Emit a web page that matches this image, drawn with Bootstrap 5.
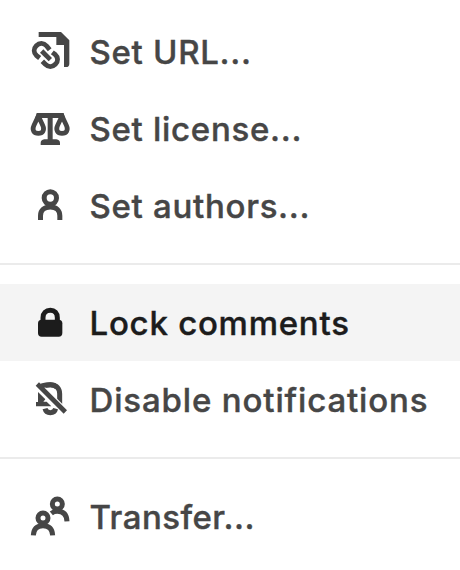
<!DOCTYPE html>
<html lang="en">
<head>
<meta charset="utf-8">
<meta name="viewport" content="width=device-width, initial-scale=1">
<title>Post menu</title>
<link rel="stylesheet" href="https://cdn.jsdelivr.net/npm/bootstrap@5.3.0/dist/css/bootstrap.min.css">
<style>
body { background: #fff; overflow: hidden; }
.post-menu { padding-top: 14px; font: 500 33px/40px Inter, "Liberation Sans", sans-serif; letter-spacing: .7px; }
.menu-entry { height: 77px; padding: 0 0 0 25px; color: #464646; background: transparent; white-space: nowrap; -webkit-text-stroke: .4px currentColor; }
.menu-entry.is-current { color: #1c1c1c; background: #f4f4f4; letter-spacing: .75px; }
.menu-entry svg { width: 52px; height: 52px; margin: -1px 12.5px 0 0; fill: none; stroke: currentColor; }
.menu-entry .solid { fill: currentColor; stroke: none; }
.raised { margin-top: -2px; }
.tracked { letter-spacing: .85px; }
.snug { letter-spacing: .45px; }
.menu-rule { height: 2px; margin: 18px 0 19px; background: #ebebeb; }
.menu-rule.second { margin-top: 19px; }
</style>
</head>
<body>
<nav class="post-menu d-flex flex-column" aria-label="Post settings">
  <a class="menu-entry d-flex align-items-center text-decoration-none" href="#">
    <svg class="flex-shrink-0" viewBox="0 3 156 156" aria-hidden="true">
      <path class="solid" d="M41 21H108L133 46V116Q133 126 123 126H117V60H94V36H41Z"/>
      <g stroke-width="14.500">
        <path d="M74 74L65 63C56 53 43 53 34 62C25 71 26 83 34 91L44 99"/>
        <path d="M82 82L90 88C100 97 100 109 91 118C82 127 70 127 61 118L52 109"/>
        <path stroke-width="14" d="M50 78L76 104"/>
      </g>
    </svg>
    <span class="raised">Set URL...</span>
  </a>
  <a class="menu-entry d-flex align-items-center text-decoration-none" href="#">
    <svg class="flex-shrink-0" viewBox="0 0 156 156" aria-hidden="true">
      <path class="solid" d="M37 30H113V45H83V109H94Q105 111 105 120V126H47V120Q47 111 58 109H68V45H37Z"/>
      <path stroke-width="14" stroke-linejoin="round" d="M40 39L27 67C20 82 27 91 40 91S60 82 53 67Z"/>
      <path stroke-width="14" stroke-linejoin="round" d="M111 39L98 67C91 82 98 91 111 91S131 82 124 67Z"/>
      <path class="solid" d="M35 30H116L120 45H31Z"/>
    </svg>
    <span class="raised">Set license...</span>
  </a>
  <a class="menu-entry d-flex align-items-center text-decoration-none" href="#">
    <svg class="flex-shrink-0" viewBox="0 0 156 156" aria-hidden="true" stroke-width="15">
      <circle cx="76" cy="54" r="18.5"/>
      <path d="M46.500 120V107C46.500 92 57 81 76 81S104.500 92 104.500 107V120"/>
    </svg>
    <span class="raised">Set authors...</span>
  </a>
  <div class="menu-rule"></div>
  <a class="menu-entry is-current d-flex align-items-center text-decoration-none" href="#">
    <svg class="flex-shrink-0" viewBox="0 -3 156 156" aria-hidden="true">
      <rect class="solid" x="39" y="68" width="73" height="51" rx="11"/>
      <path stroke-width="15" d="M54 76V62C54 48 63 40 76 40S97 48 97 62V76"/>
    </svg>
    <span>Lock comments</span>
  </a>
  <a class="menu-entry d-flex align-items-center text-decoration-none" href="#">
    <svg class="flex-shrink-0" viewBox="0 -3 156 156" aria-hidden="true" stroke-width="15">
      <path d="M52 39C58 33 66 32 76 32C94 32 104 44 104 59V94"/>
      <path class="solid" d="M39 54L61 76L55 83H65L79 97H33V84H39Z"/>
      <path d="M60 104C62 112 67 116 76 116S90 112 92 104"/>
      <path stroke="#fff" stroke-width="21" d="M46 39L119 112"/>
      <path d="M50 36C57 32 66 32 76 32C84 32 91 35 96 39"/>
      <path stroke-width="14" d="M37 30L121 114"/>
    </svg>
    <span class="tracked">Disable notifications</span>
  </a>
  <div class="menu-rule second"></div>
  <a class="menu-entry d-flex align-items-center text-decoration-none" href="#">
    <svg class="flex-shrink-0" viewBox="0 -3 156 156" aria-hidden="true" stroke-width="15">
      <circle cx="97" cy="39" r="15"/>
      <path d="M79 67C84 63 90 61 97 61C115 61 125 72 126 91"/>
      <circle cx="54" cy="81" r="24" fill="#fff" stroke="#fff" stroke-width="4"/>
      <circle cx="54" cy="81" r="15"/>
      <path d="M25 133C26 113 36 104 54 104S82 113 83 133"/>
    </svg>
    <span class="snug">Transfer...</span>
  </a>
</nav>
<script src="https://cdn.jsdelivr.net/npm/bootstrap@5.3.0/dist/js/bootstrap.bundle.min.js"></script>
</body>
</html>
